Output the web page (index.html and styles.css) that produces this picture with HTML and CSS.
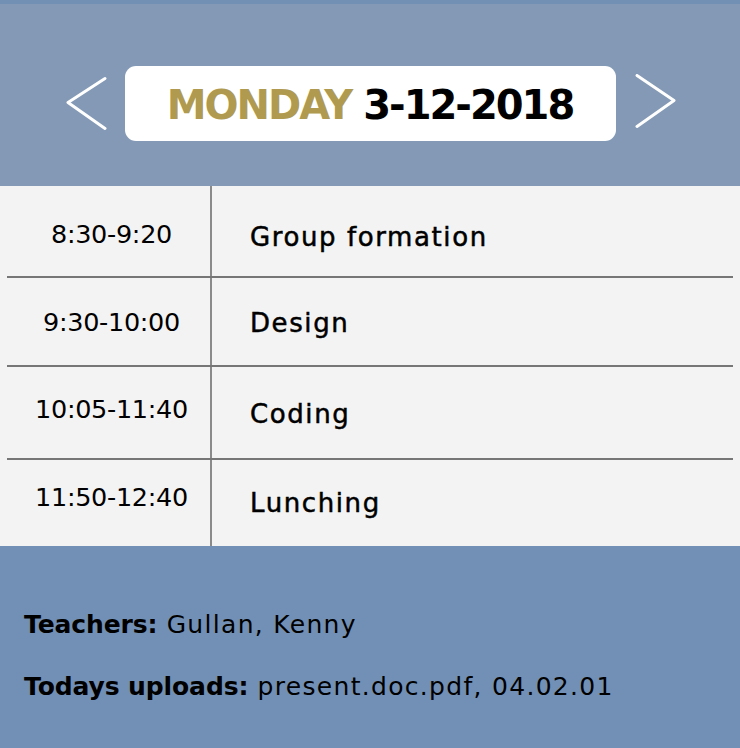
FILE: index.html
```html
<!DOCTYPE html>
<html>
<head>
<meta charset="utf-8">
<link rel="stylesheet" href="styles.css">
</head>
<body>
<header class="top">
  <div class="nav">
    <svg class="chev" width="46" height="60" viewBox="0 0 46 60"><polyline points="44,4.5 7,28.5 44,54.5" fill="none" stroke="#fff" stroke-width="3" stroke-linecap="round" stroke-linejoin="round"/></svg>
    <div class="pill"><span class="label"><span class="day">MONDAY</span> 3-12-2018</span></div>
    <svg class="chev" width="46" height="60" viewBox="0 0 46 60"><polyline points="3,1.5 40,26.5 3,52.5" fill="none" stroke="#fff" stroke-width="3" stroke-linecap="round" stroke-linejoin="round"/></svg>
  </div>
</header>
<section class="schedule">
  <div class="row r1"><div class="time">8:30-9:20</div><div class="act">Group formation</div></div>
  <div class="row r2"><div class="time">9:30-10:00</div><div class="act">Design</div></div>
  <div class="row r3"><div class="time">10:05-11:40</div><div class="act">Coding</div></div>
  <div class="row r4"><div class="time">11:50-12:40</div><div class="act">Lunching</div></div>
</section>
<footer class="info">
  <p><b>Teachers:</b> Gullan, Kenny</p>
  <p><b>Todays uploads:</b> present.doc.pdf, 04.02.01</p>
</footer>
</body>
</html>
```
FILE: styles.css
```css
html, body { margin: 0; padding: 0; }
body {
  width: 740px;
  height: 748px;
  overflow: hidden;
  font-family: "DejaVu Sans", sans-serif;
  color: #000;
  background: #7290b5;
}
.top {
  background: #8399b5;
  border-top: 4px solid #7190b4;
  height: 182px;
}
.nav {
  display: flex;
  align-items: center;
  justify-content: center;
  gap: 18px;
  padding-top: 62px;
}
.chev { display: block; }
.pill {
  width: 491px;
  height: 75px;
  background: #fff;
  border-radius: 11px;
  display: flex;
  align-items: center;
  justify-content: center;
}
.label {
  font-weight: bold;
  font-size: 40px;
  letter-spacing: -2px;
  color: #000;
  white-space: nowrap;
  padding-top: 2px;
}
.day { color: #b09a4f; }
.schedule {
  background: #f3f3f3;
  padding: 0 7px;
  height: 360px;
  display: grid;
  grid-template-rows: 92px 89px 93px 86px;
}
.row {
  display: grid;
  grid-template-columns: 205px 1fr;
  border-bottom: 2px solid #767676;
}
.row.r4 { border-bottom: none; }
.time {
  border-right: 2px solid #8a8a8a;
  display: flex;
  align-items: center;
  justify-content: center;
  font-size: 25.5px;
  padding-left: 6px;
  letter-spacing: -0.3px;
}
.act {
  display: flex;
  align-items: center;
  padding-left: 38px;
  font-size: 26px;
  letter-spacing: 1.6px;
  -webkit-text-stroke: 0.5px #000;
}
.r1 .time { padding-top: 6px; }
.r1 .act { padding-top: 12px; }
.r2 .time { padding-top: 0; }
.r2 .act { padding-top: 3px; }
.r3 .time { padding-bottom: 8px; }
.r3 .act { padding-top: 2px; }
.r4 .time { padding-bottom: 12px; }
.r4 .act { padding-bottom: 0; }
.info {
  padding: 64px 24px 0;
  font-size: 25px;
  letter-spacing: 1.3px;
}
.info b { letter-spacing: -0.1px; }
.info p { margin: 0 0 33px; }
```
